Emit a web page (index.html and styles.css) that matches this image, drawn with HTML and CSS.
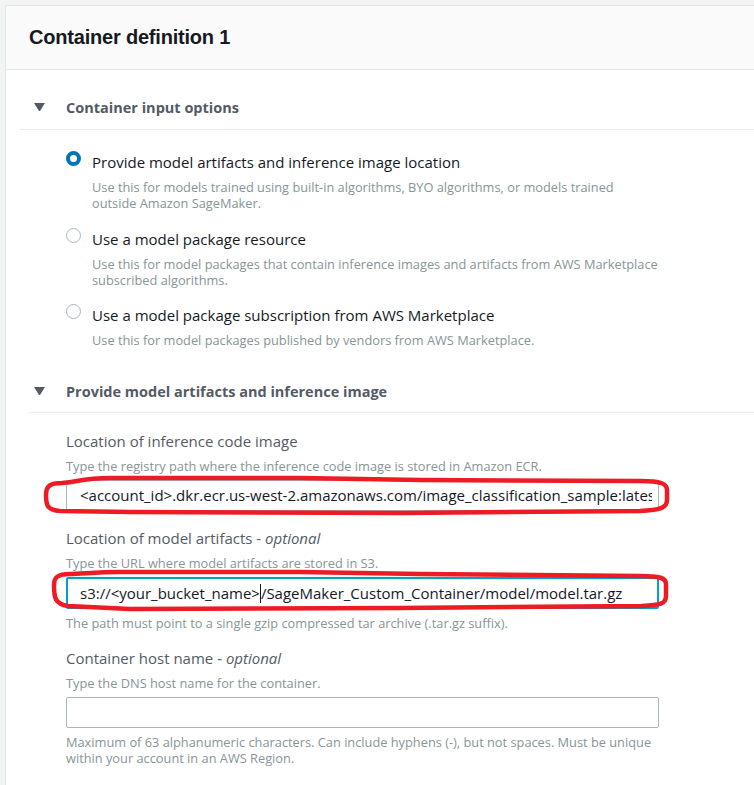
FILE: index.html
```html
<!DOCTYPE html>
<html lang="en">
<head>
<meta charset="utf-8">
<title>Container definition 1</title>
<link rel="stylesheet" href="styles.css">
</head>
<body>
<div class="page">
  <div class="card">
    <div class="card-header">
      <h2 class="card-title">Container definition 1</h2>
    </div>

    <div class="section">
      <div class="section-head">
        <span class="caret"></span>
        <span class="section-title">Container input options</span>
      </div>
      <div class="radio-group">
        <div class="radio-item">
          <span class="radio radio-on"></span>
          <div class="radio-text">
            <div class="radio-label">Provide model artifacts and inference image location</div>
            <div class="radio-desc">Use this for models trained using built-in algorithms, BYO algorithms, or models trained outside Amazon SageMaker.</div>
          </div>
        </div>
        <div class="radio-item">
          <span class="radio"></span>
          <div class="radio-text">
            <div class="radio-label">Use a model package resource</div>
            <div class="radio-desc">Use this for model packages that contain inference images and artifacts from AWS Marketplace subscribed algorithms.</div>
          </div>
        </div>
        <div class="radio-item">
          <span class="radio"></span>
          <div class="radio-text">
            <div class="radio-label">Use a model package subscription from AWS Marketplace</div>
            <div class="radio-desc">Use this for model packages published by vendors from AWS Marketplace.</div>
          </div>
        </div>
      </div>
    </div>

    <div class="section section-2">
      <div class="section-head">
        <span class="caret"></span>
        <span class="section-title">Provide model artifacts and inference image</span>
      </div>
      <div class="fields">
        <div class="field">
          <div class="field-label">Location of inference code image</div>
          <div class="field-desc">Type the registry path where the inference code image is stored in Amazon ECR.</div>
          <div class="input input-long"><span class="input-value">&lt;account_id&gt;.dkr.ecr.us-west-2.amazonaws.com/image_classification_sample:latest</span></div>
        </div>
        <div class="field">
          <div class="field-label">Location of model artifacts - <em>optional</em></div>
          <div class="field-desc">Type the URL where model artifacts are stored in S3.</div>
          <div class="input input-focus"><span class="input-value">s3://&lt;your_bucket_name&gt;<span class="cursor"></span>/SageMaker_Custom_Container/model/model.tar.gz</span></div>
          <div class="field-hint">The path must point to a single gzip compressed tar archive (.tar.gz suffix).</div>
        </div>
        <div class="field">
          <div class="field-label">Container host name - <em>optional</em></div>
          <div class="field-desc">Type the DNS host name for the container.</div>
          <div class="input"></div>
          <div class="field-hint">Maximum of 63 alphanumeric characters. Can include hyphens (-), but not spaces. Must be unique within your account in an AWS Region.</div>
        </div>
      </div>
    </div>
  </div>

  <svg class="marks" width="754" height="785" viewBox="0 0 754 785" xmlns="http://www.w3.org/2000/svg">
    <path d="M62 483 C50 483 46 486 46 495 C46 505 47 510 60 511 L130 512 L400 513 L640 511 C660 510 667 508 667 500 L667 490 C667 484 662 481 640 481 L420 480 L300 478 L110 478 C85 478 75 482 62 483 Z" fill="none" stroke="#ed1c24" stroke-width="4.5" stroke-linejoin="round"/>
    <path d="M70 574 C58 574 54 577 54 585 C54 598 55 604 68 606 L130 609 L400 608 L642 606 C660 605 666 604 666 596 L666 584 C666 578 660 576 640 576 L420 574 L300 572 L120 572 C95 572 82 574 70 574 Z" fill="none" stroke="#ed1c24" stroke-width="4.5" stroke-linejoin="round"/>
  </svg>
</div>
</body>
</html>
```

FILE: styles.css
```css
* { box-sizing: border-box; }

html, body {
  margin: 0;
  padding: 0;
}

body {
  background: #f2f3f3;
  font-family: "Open Sans", "Liberation Sans", Arial, sans-serif;
  color: #16191f;
  overflow: hidden;
  width: 754px;
  height: 785px;
}

.page {
  position: relative;
  width: 754px;
  height: 785px;
  padding: 5px 0 0 5px;
  overflow: hidden;
}

.card {
  width: 820px;
  background: #ffffff;
  border-left: 1px solid #e3e6e6;
  border-top: 1px solid #e3e6e6;
  min-height: 800px;
}

.card-header {
  height: 64px;
  background: #fafafa;
  border-bottom: 1px solid #e3e6e6;
  display: flex;
  align-items: center;
  padding-left: 23px;
}

.card-title {
  margin: 0;
  font-family: "Liberation Sans", Arial, sans-serif;
  font-size: 20px;
  font-weight: bold;
  color: #16191f;
  letter-spacing: -0.2px;
}

.section {
  margin-left: 14px;
}

.section-head {
  display: flex;
  align-items: center;
  height: 60px;
  padding-top: 15px;
  border-bottom: 1px solid #eaeded;
}

.section-2 .section-head {
  height: 65px;
  padding-top: 22px;
  margin-left: 8px;
}
.section-2 .caret { margin-left: 6px; }

.caret {
  flex: none;
  width: 11px;
  height: 8px;
  margin-left: 14px;
  border-left: 5.5px solid transparent;
  border-right: 5.5px solid transparent;
  border-top: 8px solid #545b64;
}

.section-title {
  margin-left: 21px;
  font-size: 14.5px;
  font-weight: bold;
  color: #545b64;
}

.radio-group {
  padding: 21px 0 0 46px;
  display: flex;
  flex-direction: column;
  gap: 16.5px;
}

.radio-item {
  display: flex;
  align-items: flex-start;
}

.radio {
  flex: none;
  width: 15px;
  height: 15px;
  border-radius: 50%;
  border: 1.5px solid #aab7b8;
  background: #fff;
}

.radio-on {
  border: 4.5px solid #0073bb;
}

.radio-text {
  margin-left: 11px;
  width: 567px;
}

.radio-label {
  font-size: 15px;
  line-height: 22px;
  color: #16191f;
}

.radio-desc {
  margin-top: 6px;
  font-size: 12.8px;
  line-height: 16px;
  color: #879596;
}

.fields {
  padding: 17px 0 0 46px;
  width: 645px;
  display: flex;
  flex-direction: column;
  gap: 16px;
}

.field-label {
  font-size: 15px;
  line-height: 22px;
  color: #545b64;
}

.field-label em {
  font-style: italic;
}

.field-desc,
.field-hint {
  margin-top: 5.5px;
  font-size: 12.8px;
  line-height: 16px;
  color: #879596;
}

.field-hint {
  margin-top: 6px;
}

.input {
  margin-top: 6.5px;
  width: 593px;
  height: 31px;
  border: 1px solid #aab7b8;
  border-radius: 2px;
  padding: 0 11px 0 13px;
  font-size: 15px;
  line-height: 29px;
  color: #16191f;
}

.input-long {
  padding-right: 6px;
}

.input-value {
  display: block;
  white-space: nowrap;
  overflow: hidden;
}

.input-focus {
  height: 32px;
  border: 2px solid #00a1c9;
  padding-left: 12px;
  line-height: 28px;
}

.cursor {
  display: inline-block;
  width: 1px;
  height: 19px;
  background: #16191f;
  vertical-align: -4px;
}

.marks {
  position: absolute;
  left: 0;
  top: 0;
  pointer-events: none;
}
```
